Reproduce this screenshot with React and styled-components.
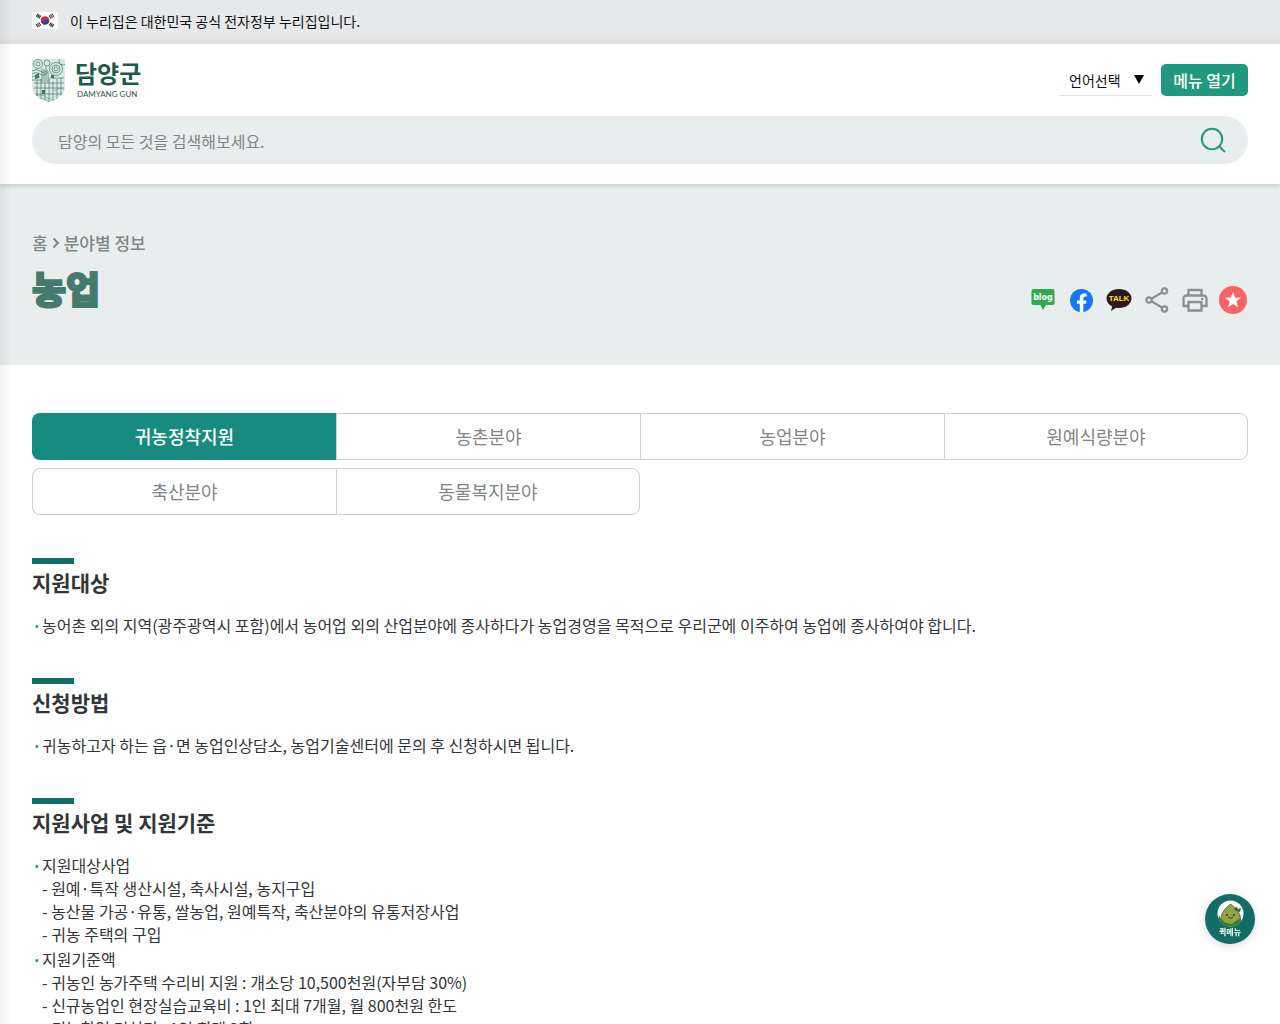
import React from "react";
import styled, { createGlobalStyle, css } from "styled-components";

const GlobalStyles = createGlobalStyle`
  :root {
    --green: #1f9a80;
    --teal: #188b80;
    --deep: #106e66;
    --mist: #e8eded;
    --line: #cccfd0;
    --grey: #828686;
    --text: #333638;
  }
  *, *::before, *::after {
    box-sizing: border-box;
  }
  html {
    font-size: 16px;
  }
  body {
    margin: 0;
    background: #fff;
    color: var(--text);
    font-family: "Noto Sans CJK KR", "Noto Sans", sans-serif;
  }
  button, input, select {
    font-family: inherit;
  }
  a {
    color: inherit;
    text-decoration: none;
  }
  h1, h2, p, ul {
    margin: 0;
    padding: 0;
  }
  ul {
    list-style: none;
  }
`;

const Page = styled.div`
  position: relative;
  min-height: 100vh;
  &::after {
    content: "";
    position: absolute;
    top: 0;
    bottom: 0;
    left: 0;
    width: 12px;
    background: linear-gradient(to right, rgba(0, 0, 0, 0.06), transparent);
    pointer-events: none;
  }
`;

const GovBar = styled.div`
  display: flex;
  align-items: center;
  gap: 12px;
  height: 44px;
  padding: 0 32px 2px;
  background: linear-gradient(#e6e8ea 36px, #dddfe1);
  color: #111;
  font-size: 14px;
  svg {
    margin-bottom: 2px;
  }
`;

const HeaderStyles = styled.header`
  position: relative;
  height: 140px;
  padding: 12px 32px 20px;
  background: white;
  box-shadow: 0 3px 3px rgba(0, 0, 0, 0.1);
`;

const HeaderTop = styled.div`
  display: flex;
  align-items: center;
  justify-content: space-between;
  height: 48px;
`;

const LogoStyles = styled.a`
  display: flex;
  align-items: center;
  gap: 10px;
  color: #1d5c4a;
  strong {
    display: block;
    font-size: 24px;
    font-weight: 700;
    line-height: 28px;
  }
  small {
    display: block;
    padding-left: 2px;
    font-family: Lato, sans-serif;
    font-size: 8px;
    line-height: 14px;
    white-space: nowrap;
  }
`;

const Tools = styled.div`
  display: flex;
  align-items: center;
  gap: 9px;
`;

const LangPicker = styled.label`
  display: flex;
  align-items: center;
  width: 92px;
  height: 32px;
  border-bottom: 1px solid #dfe2e2;
  select {
    flex: 1;
    min-width: 0;
    padding: 0 0 0 9px;
    border: 0;
    appearance: none;
    background: transparent;
    color: #111;
    font-size: 14px;
  }
  svg {
    margin-right: 8px;
  }
`;

const MenuButton = styled.button`
  width: 87px;
  height: 32px;
  padding: 0;
  border: 0;
  border-radius: 5px;
  background: var(--green);
  color: white;
  font-size: 16px;
  font-weight: 500;
  line-height: 32px;
`;

const SearchForm = styled.form`
  display: flex;
  align-items: center;
  height: 48px;
  margin-top: 12px;
  padding: 0 20px 0 26px;
  border-radius: 24px;
  background: var(--mist);
  input {
    flex: 1;
    padding: 2px 0 0;
    border: 0;
    outline: 0;
    background: transparent;
    color: var(--text);
    font-size: 16px;
    &::placeholder {
      color: var(--grey);
      opacity: 1;
    }
  }
  button {
    display: flex;
    padding: 0;
    border: 0;
    background: none;
  }
`;

const Hero = styled.section`
  display: flex;
  align-items: flex-end;
  justify-content: space-between;
  height: 181px;
  padding: 0 33px 48px 32px;
  background: #e8eeee;
`;

const Crumbs = styled.nav`
  display: flex;
  align-items: center;
  gap: 4px;
  color: var(--grey);
  font-size: 17px;
  font-weight: 500;
  line-height: 24px;
`;

const Title = styled.h1`
  padding-top: 4px;
  color: #457b6d;
  font-size: 37px;
  font-weight: 900;
  line-height: 58px;
  -webkit-text-stroke: 2px #457b6d;
`;

const ShareList = styled.ul`
  display: flex;
  gap: 10px;
  li {
    display: flex;
  }
  a {
    display: flex;
    align-items: center;
    justify-content: center;
    width: 28px;
    height: 34px;
  }
`;

const Main = styled.main`
  padding: 48px 32px;
`;

const Tabs = styled.ul`
  display: grid;
  grid-template-columns: repeat(4, 1fr);
  row-gap: 8px;
`;

const activeTab = css`
  border-color: var(--teal);
  background: var(--teal);
  color: white;
  font-weight: 500;
`;

const Tab = styled.a`
  display: block;
  height: 47px;
  border: 1px solid var(--line);
  border-right-width: ${(p) => (p.$last ? "1px" : "0")};
  border-radius: ${(p) =>
    p.$first ? "8px 0 0 8px" : p.$last ? "0 8px 8px 0" : "0"};
  color: var(--grey);
  font-size: 18px;
  line-height: 45px;
  text-align: center;
  ${(p) => p.$active && activeTab}
`;

const Block = styled.section`
  margin-top: 43px;
  & + & {
    margin-top: 41px;
  }
  h2 {
    margin-bottom: 14px;
    color: #333638;
    font-size: 21px;
    font-weight: 700;
    line-height: 36px;
    &::before {
      content: "";
      display: block;
      width: 42px;
      height: 6px;
      background: var(--deep);
    }
  }
`;

const DotList = styled.ul`
  font-size: 16px;
  line-height: 23px;
  > li {
    padding-left: 10px;
    & + li {
      margin-top: 2px;
    }
  }
  > li::before {
    content: "·";
    float: left;
    width: 10px;
    margin-left: -10px;
    color: var(--green);
    font-weight: 700;
  }
`;

const DashList = styled.ul`
  li::before {
    content: "- ";
  }
`;

const QuickMenu = styled.button`
  position: fixed;
  right: 25px;
  bottom: 80px;
  display: flex;
  flex-direction: column;
  align-items: center;
  width: 50px;
  height: 50px;
  padding: 6px 0 0;
  border: 0;
  border-radius: 50%;
  background: var(--deep);
  box-shadow: 0 2px 8px rgba(60, 70, 120, 0.2);
  color: white;
  font-size: 8px;
  font-weight: 700;
  line-height: 10px;
`;

const Flag = () => (
  <svg width="26" height="17" viewBox="0 0 26 17" aria-hidden="true">
    <rect width="26" height="17" fill="white" />
    <g transform="rotate(28 13 8.5)">
      <path d="M8.7 8.5a4.3 4.3 0 0 1 8.6 0z" fill="#d8283c" />
      <path d="M8.7 8.5a4.3 4.3 0 0 0 8.6 0z" fill="#1d4d9e" />
      <circle cx="10.8" cy="8.5" r="2.1" fill="#d8283c" />
      <circle cx="15.2" cy="8.5" r="2.1" fill="#1d4d9e" />
    </g>
    <g stroke="#222" strokeWidth="1.1">
      <path d="M4.200 4.600l2-2.900M5.500 5.500l2-2.900M6.800 6.400l2-2.900" />
      <path d="M21.800 12.400l-2 2.900M20.500 11.500l-2 2.900M19.200 10.600l-2 2.900" />
      <path
        d="M21.800 4.600l-2-2.900M20.500 5.500l-2-2.900M19.200 6.400l-2-2.900"
        strokeDasharray="1.6 0.4"
      />
      <path
        d="M4.200 12.400l2 2.900M5.500 11.500l2 2.900M6.800 10.600l2 2.900"
        strokeDasharray="1.6 0.4"
      />
    </g>
  </svg>
);

const Crest = () => (
  <svg width="33" height="43" viewBox="0 0 33 43" fill="none" aria-hidden="true">
    <defs>
      <clipPath id="shield">
        <path d="M0 0h33v27c0 9-8 14-16.500 16C8 41 0 36 0 27z" />
      </clipPath>
    </defs>
    <g clipPath="url(#shield)" strokeWidth="0.7">
      <rect width="33" height="43" fill="#dce8e3" />
      <g stroke="#3f7a67">
        <circle cx="6" cy="5" r="2" />
        <circle cx="6" cy="5" r="4.500" />
        <circle cx="15" cy="4" r="3" />
        <circle cx="24" cy="10" r="2" />
        <circle cx="24" cy="10" r="4" />
        <circle cx="24" cy="10" r="6.500" />
        <circle cx="31" cy="2" r="4" />
        <path d="M0 12q4-3 8 0t8-1M0 15q4-3 8 0t8-2M0 18q4-3 8 0" />
        <path d="M10 9v14M12 10v13M14 7v16M16 12v11" />
      </g>
      <path
        d="M2 24h30M2 29h30M3 35h28M5 21v16M9 20v20M13 24v17M17 19v24M21 22v20M25 20v20M29 19v18M18 19h14M0 21h10"
        stroke="#47796f"
      />
      <path d="M3 16l4-2v5l-4 1zM19 16h3v3h-3zM10 31h3v4h-3z" fill="#3f7a67" />
      <path
        d="M0 39q8-6 16 0t17-3M0 42q8-6 16 0t17-3M22 32q6-5 11-1"
        stroke="#6d9a98"
      />
    </g>
  </svg>
);

const Logo = () => (
  <LogoStyles href="#">
    <Crest />
    <span>
      <strong>담양군</strong>
      <small>DAMYANG GUN</small>
    </span>
  </LogoStyles>
);

const SearchIcon = () => (
  <svg width="30" height="30" viewBox="0 0 30 30" fill="none" aria-hidden="true">
    <circle cx="14" cy="14" r="10.200" stroke="#1f9a80" strokeWidth="2" />
    <path d="M21.300 21.500l5.700 5.500" stroke="#1f9a80" strokeWidth="2" />
  </svg>
);

const BlogIcon = () => (
  <svg width="24" height="22" viewBox="0 0 24 22" aria-hidden="true">
    <path
      d="M2.500 0h19a2 2 0 0 1 2 2v12a2 2 0 0 1-2 2h-6.500L12 21l-2.500-5h-7a2 2 0 0 1-2-2V2a2 2 0 0 1 2-2z"
      fill="#2bae4a"
    />
    <text
      x="12"
      y="11"
      fill="white"
      fontFamily="DejaVu Sans"
      fontSize="8"
      fontWeight="700"
      textAnchor="middle"
    >
      blog
    </text>
  </svg>
);

const FacebookIcon = () => (
  <svg width="23" height="23" viewBox="0 0 24 24" aria-hidden="true">
    <circle cx="12" cy="12" r="12" fill="#1877f2" />
    <path
      d="M16.700 15.500l.5-3.500h-3.300V9.800c0-.9.500-1.900 2-1.900h1.500V5s-1.400-.2-2.700-.2c-2.700 0-4.500 1.600-4.500 4.600V12h-3v3.500h3v8.400a12 12 0 0 0 3.700 0v-8.400z"
      fill="white"
    />
  </svg>
);

const TalkIcon = () => (
  <svg width="26" height="24" viewBox="0 0 26 24" aria-hidden="true">
    <path
      d="M13 1C6 1 .5 5.200.5 10.500c0 3.500 2.300 6.300 5.700 8L5 23l5-3.300c1 .2 2 .3 3 .3 7 0 12.500-4.200 12.500-9.500S20 1 13 1z"
      fill="#2e1a1d"
    />
    <text
      x="13"
      y="13"
      fill="#ffe812"
      fontFamily="Liberation Sans"
      fontSize="8"
      fontWeight="700"
      textAnchor="middle"
    >
      TALK
    </text>
  </svg>
);

const ShareIcon = () => (
  <svg
    width="24"
    height="26"
    viewBox="0 0 24 26"
    fill="none"
    stroke="#8b8f8f"
    strokeWidth="2.200"
    aria-hidden="true"
  >
    <circle cx="4" cy="13" r="2.700" />
    <circle cx="19.500" cy="4" r="2.700" />
    <circle cx="19.500" cy="22" r="2.700" />
    <path d="M6.500 11.700L17 5.500M6.500 14.300L17 20.500" />
  </svg>
);

const PrintIcon = () => (
  <svg
    width="26"
    height="24"
    viewBox="0 0 26 24"
    fill="none"
    stroke="#8b8f8f"
    strokeWidth="2.300"
    aria-hidden="true"
  >
    <path d="M6.500 7V2h13v5" />
    <path d="M6 18H1.500V10.500a3 3 0 0 1 3-3h17a3 3 0 0 1 3 3V18h-4.500" />
    <path d="M6.500 14h13v8.500h-13z" />
    <path d="M19 11h2.500" strokeWidth="2" />
  </svg>
);

const StarIcon = () => (
  <svg width="28" height="28" viewBox="0 0 28 28" aria-hidden="true">
    <circle cx="14" cy="14" r="14" fill="#fb6267" />
    <path
      d="M14 6l2.100 5.500 5.900.3-4.600 3.700 1.600 5.700-5-3.200-5 3.200 1.600-5.700L6 11.800l5.900-.3z"
      fill="white"
    />
  </svg>
);

const Mascot = () => (
  <svg width="27" height="27" viewBox="0 0 27 27" aria-hidden="true">
    <defs>
      <clipPath id="face">
        <circle cx="13.500" cy="13.500" r="13" />
      </clipPath>
    </defs>
    <circle cx="13.500" cy="13.500" r="13" fill="white" />
    <g clipPath="url(#face)">
      <path
        d="M13.500 4C8 8 4 13 4 19c0 5 4 8 9.500 8s10-3 10-8c0-6-4-11-10-15z"
        fill="#8da545"
        stroke="#5a4a2a"
        strokeWidth="0.700"
      />
      <path d="M2 15c3 7 8 9 13 9l8-6 4 9H0z" fill="#377d37" />
      <path d="M17 8l3-1 1 2 3-1-1 4-4-1z" fill="#356c35" />
    </g>
    <circle cx="10" cy="15" r="0.900" fill="#35331d" />
    <circle cx="17" cy="15" r="0.900" fill="#35331d" />
    <path d="M11 17q2.500 2.500 5 0" fill="none" stroke="#35331d" strokeWidth="0.900" />
    <circle cx="8.500" cy="17.500" r="1.200" fill="#cf9351" />
    <circle cx="18.500" cy="17.500" r="1.200" fill="#cf9351" />
  </svg>
);

const shares = [
  { label: "블로그", Icon: BlogIcon },
  { label: "페이스북", Icon: FacebookIcon },
  { label: "카카오톡", Icon: TalkIcon },
  { label: "공유", Icon: ShareIcon },
  { label: "인쇄", Icon: PrintIcon },
  { label: "즐겨찾기", Icon: StarIcon },
];

const tabs = [
  "귀농정착지원",
  "농촌분야",
  "농업분야",
  "원예식량분야",
  "축산분야",
  "동물복지분야",
];

const blocks = [
  {
    title: "지원대상",
    items: [
      {
        text: "농어촌 외의 지역(광주광역시 포함)에서 농어업 외의 산업분야에 종사하다가 농업경영을 목적으로 우리군에 이주하여 농업에 종사하여야 합니다.",
      },
    ],
  },
  {
    title: "신청방법",
    items: [
      {
        text: "귀농하고자 하는 읍·면 농업인상담소, 농업기술센터에 문의 후 신청하시면 됩니다.",
      },
    ],
  },
  {
    title: "지원사업 및 지원기준",
    items: [
      {
        text: "지원대상사업",
        sub: [
          "원예·특작 생산시설, 축사시설, 농지구입",
          "농산물 가공·유통, 쌀농업, 원예특작, 축산분야의 유통저장사업",
          "귀농 주택의 구입",
        ],
      },
      {
        text: "지원기준액",
        sub: [
          "귀농인 농가주택 수리비 지원 : 개소당 10,500천원(자부담 30%)",
          "신규농업인 현장실습교육비 : 1인 최대 7개월, 월 800천원 한도",
          "귀농창업 컨설팅 : 1인 최대 3회",
        ],
      },
    ],
  },
];

const App = () => {
  return (
    <>
      <GlobalStyles />
      <Page>
        <GovBar>
          <Flag />
          <p>이 누리집은 대한민국 공식 전자정부 누리집입니다.</p>
        </GovBar>
        <HeaderStyles>
          <HeaderTop>
            <Logo />
            <Tools>
              <LangPicker>
                <select aria-label="언어선택">
                  <option>언어선택</option>
                </select>
                <svg width="10" height="9" viewBox="0 0 10 9" aria-hidden="true">
                  <path d="M0 0h10L5 9z" fill="#000" />
                </svg>
              </LangPicker>
              <MenuButton type="button">메뉴 열기</MenuButton>
            </Tools>
          </HeaderTop>
          <SearchForm role="search">
            <input
              type="search"
              aria-label="검색"
              placeholder="담양의 모든 것을 검색해보세요."
            />
            <button type="button" aria-label="검색">
              <SearchIcon />
            </button>
          </SearchForm>
        </HeaderStyles>
        <Hero>
          <div>
            <Crumbs>
              <a href="#">홈</a>
              <svg width="8" height="12" viewBox="0 0 8 12" aria-hidden="true">
                <path
                  d="M1.500 1.500L6 6l-4.500 4.500"
                  fill="none"
                  stroke="#828686"
                  strokeWidth="2"
                />
              </svg>
              <a href="#">분야별 정보</a>
            </Crumbs>
            <Title>농업</Title>
          </div>
          <ShareList>
            {shares.map(({ label, Icon }) => (
              <li key={label}>
                <a href="#" aria-label={label}>
                  <Icon />
                </a>
              </li>
            ))}
          </ShareList>
        </Hero>
        <Main>
          <Tabs>
            {tabs.map((name, i) => (
              <li key={name}>
                <Tab
                  href="#"
                  $active={i === 0}
                  $first={i % 4 === 0}
                  $last={i % 4 === 3 || i === tabs.length - 1}
                >
                  {name}
                </Tab>
              </li>
            ))}
          </Tabs>
          {blocks.map((block) => (
            <Block key={block.title}>
              <h2>{block.title}</h2>
              <DotList>
                {block.items.map((item) => (
                  <li key={item.text}>
                    {item.text}
                    {item.sub && (
                      <DashList>
                        {item.sub.map((line) => (
                          <li key={line}>{line}</li>
                        ))}
                      </DashList>
                    )}
                  </li>
                ))}
              </DotList>
            </Block>
          ))}
        </Main>
        <QuickMenu type="button">
          <Mascot />
          퀵메뉴
        </QuickMenu>
      </Page>
    </>
  );
};

export default App;
